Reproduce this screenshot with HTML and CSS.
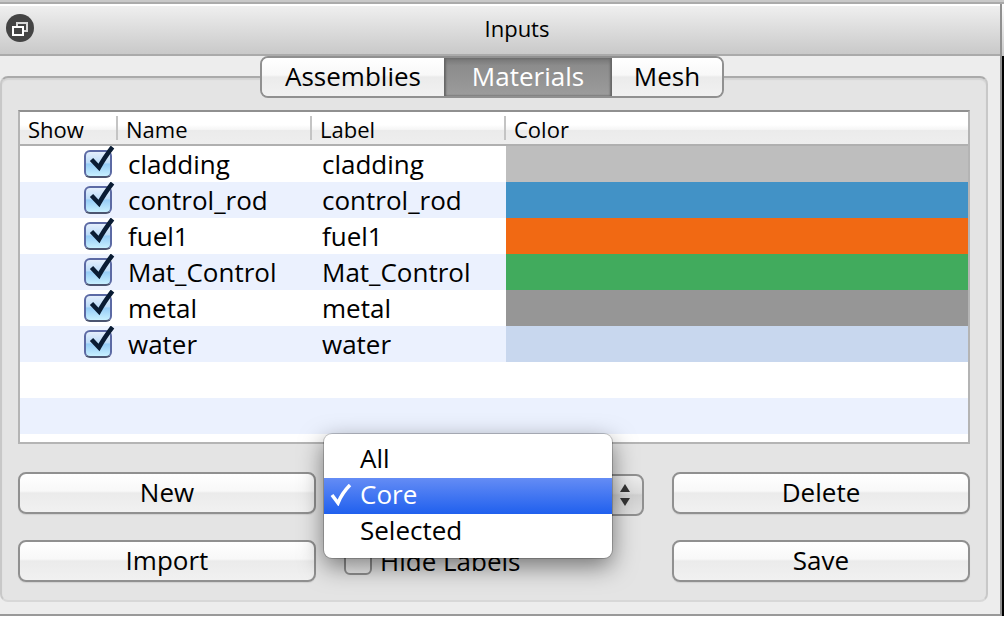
FILE: index.html
```html
<!DOCTYPE html>
<html lang="en">
<head>
<meta charset="utf-8">
<title>Inputs</title>
<link rel="stylesheet" href="styles.css">
</head>
<body>
<svg class="defs" aria-hidden="true">
  <symbol id="tick" viewBox="0 0 32 32">
    <path d="M7.500 13.500 L15 21.500 Q20 12 28.500 1" fill="none" stroke="#0a1c33" stroke-width="4.500"/>
  </symbol>
</svg>
<main class="window">
  <header class="titlebar">
    <button class="float-button" type="button" aria-label="Float panel">
      <svg viewBox="0 0 28 28" width="28" height="28" aria-hidden="true">
        <circle cx="14" cy="14" r="14" fill="#444"/>
        <path d="M11 12V9H21V17H18" fill="none" stroke="#d8d8d8" stroke-width="2"/>
        <rect x="7" y="13" width="10" height="8" fill="#444" stroke="#fff" stroke-width="2"/>
      </svg>
    </button>
    <h1 class="title">Inputs</h1>
  </header>
  <div class="content">
    <nav class="tabs" role="tablist">
      <button class="tab tab-assemblies" type="button" role="tab">Assemblies</button>
      <button class="tab tab-materials" type="button" role="tab" aria-selected="true">Materials</button>
      <button class="tab tab-mesh" type="button" role="tab">Mesh</button>
    </nav>
    <section class="group">
      <div class="list">
        <table class="materials">
          <colgroup><col class="col-show"><col class="col-text"><col class="col-text"><col></colgroup>
          <thead><tr><th>Show</th><th>Name</th><th>Label</th><th>Color</th></tr></thead>
          <tbody>
            <tr><td><span class="check"><input type="checkbox" checked aria-label="Show cladding"><svg class="tick"><use href="#tick"/></svg></span></td><td>cladding</td><td>cladding</td><td class="cladding"></td></tr>
            <tr><td><span class="check"><input type="checkbox" checked aria-label="Show control_rod"><svg class="tick"><use href="#tick"/></svg></span></td><td>control_rod</td><td>control_rod</td><td class="control-rod"></td></tr>
            <tr><td><span class="check"><input type="checkbox" checked aria-label="Show fuel1"><svg class="tick"><use href="#tick"/></svg></span></td><td>fuel1</td><td>fuel1</td><td class="fuel"></td></tr>
            <tr><td><span class="check"><input type="checkbox" checked aria-label="Show Mat_Control"><svg class="tick"><use href="#tick"/></svg></span></td><td>Mat_Control</td><td>Mat_Control</td><td class="mat-control"></td></tr>
            <tr><td><span class="check"><input type="checkbox" checked aria-label="Show metal"><svg class="tick"><use href="#tick"/></svg></span></td><td>metal</td><td>metal</td><td class="metal"></td></tr>
            <tr><td><span class="check"><input type="checkbox" checked aria-label="Show water"><svg class="tick"><use href="#tick"/></svg></span></td><td>water</td><td>water</td><td class="water"></td></tr>
          </tbody>
        </table>
      </div>
      <div class="actions">
        <button class="push" type="button">New</button>
        <div class="picker">
          <select class="scope" aria-label="Show scope">
            <option>All</option><option selected>Core</option><option>Selected</option>
          </select>
          <svg class="arrows" viewBox="0 0 12 22" aria-hidden="true"><path d="M6 0L11 8H1zM6 22L11 14H1z" fill="#333"/></svg>
          <div class="menu" role="menu">
            <button class="item" type="button" role="menuitemradio">All</button>
            <button class="item current" type="button" role="menuitemradio" aria-checked="true"><svg class="mark" viewBox="0 0 22 22" aria-hidden="true"><path d="M2 11l6 8Q12 9 20 1" fill="none" stroke="#fff" stroke-width="3.500"/></svg>Core</button>
            <button class="item" type="button" role="menuitemradio">Selected</button>
          </div>
        </div>
        <button class="push" type="button">Delete</button>
        <button class="push" type="button">Import</button>
        <label class="hide-labels"><input type="checkbox">Hide Labels</label>
        <button class="push" type="button">Save</button>
      </div>
    </section>
  </div>
</main>
</body>
</html>
```
FILE: styles.css
```css
* {
  box-sizing: border-box;
}

body {
  margin: 0;
  min-height: 100vh;
  display: flex;
  flex-direction: column;
  padding: 4px 2px 0 0;
  border-bottom: 2px solid #fff;
  background: linear-gradient(#c8c8c8 2px, #aaa 2px, #aaa 4px, #fff 4px, #c8c8c8 56px, #000 56px);
  font: 26px/36px "Open Sans", "Noto Sans", sans-serif;
  color: #000;
}

.defs {
  position: absolute;
  width: 0;
  height: 0;
}

button,
select,
input {
  margin: 0;
  padding: 0;
  border: 0;
  font: inherit;
  color: inherit;
  appearance: none;
}

.window {
  flex: 1;
  display: flex;
  flex-direction: column;
  background: #ededed;
  border-right: 2px solid #909090;
  border-bottom: 2px solid #999;
}

.titlebar {
  display: flex;
  align-items: center;
  height: 52px;
  padding: 0 0 4px 6px;
  border-top: 2px solid #fff;
  border-bottom: 2px solid #aaa;
  background: linear-gradient(#efefef, #c9c9c9);
}

.float-button {
  width: 28px;
  height: 28px;
  background: none;
}

.float-button svg {
  display: block;
}

.title {
  flex: 1;
  margin: 0;
  text-align: center;
  font-size: 22px;
  font-weight: 400;
}

.content {
  flex: 1;
  display: flex;
  flex-direction: column;
  padding: 0 12px 12px 0;
}

.tabs {
  z-index: 1;
  align-self: center;
  display: flex;
  height: 42px;
  margin: 0 4px -22px 0;
  border: 2px solid #909090;
  border-radius: 8px;
  overflow: hidden;
}

.tab,
.push {
  padding-bottom: 2px;
  background: linear-gradient(#fff, #f8f8f8 45%, #ebebeb 50%, #f1f1f1);
}

.tab-assemblies {
  width: 182px;
}

.tab-materials {
  width: 168px;
  background: linear-gradient(#747474, #8c8c8c 20%, #9c9c9c);
  box-shadow: inset 2px 0 2px #666, inset -2px 0 2px #666;
  color: #fff;
}

.tab-mesh {
  width: 110px;
}

.group {
  flex: 1;
  display: flex;
  flex-direction: column;
  gap: 28px;
  padding: 32px 16px 18px;
  background: #e4e4e4;
  border: 2px solid #c8c8c8;
  border-top-color: #aaa;
  border-bottom-color: #d8d8d8;
  border-radius: 8px;
  box-shadow: inset 0 2px 1px #d4d4d4;
}

.list {
  flex: 1;
  border: 2px solid #b4b4b4;
  border-top-color: #909090;
  background: linear-gradient(#fff 36px, #ebf1fe 36px) 0 34px / 100% 72px;
}

.materials {
  width: 100%;
  table-layout: fixed;
  border-collapse: separate;
  border-spacing: 0;
}

.col-show {
  width: 98px;
}

.col-text {
  width: 194px;
}

th {
  height: 34px;
  padding: 2px 8px 0;
  border-bottom: 2px solid #b0b0b0;
  background:
    linear-gradient(#c4c4c4, #c4c4c4) right 4px / 2px 24px no-repeat,
    linear-gradient(#fff 40%, #f5f5f5 55%, #ebebeb 56%, #eee);
  font-size: 22px;
  line-height: 30px;
  font-weight: 400;
  text-align: left;
}

th:last-child {
  background: linear-gradient(#fff 40%, #f5f5f5 55%, #ebebeb 56%, #eee);
}

td {
  height: 36px;
  padding: 0 10px;
}

td:first-child {
  padding: 0 6px 0 0;
}

.check {
  display: block;
  position: relative;
  width: 28px;
  height: 28px;
  margin-left: auto;
}

.check input {
  display: block;
  width: 28px;
  height: 28px;
  border: 2px solid #5c6aa4;
  border-bottom-color: #4c5570;
  border-radius: 6px;
  background: linear-gradient(#e4effc, #bcdcf8 45%, #96ccf6 50%, #c8f0ff);
}

.tick {
  position: absolute;
  left: 0;
  top: -4px;
  width: 32px;
  height: 32px;
  pointer-events: none;
}

.cladding { background: #bebebe; }
.control-rod { background: #4292c6; }
.fuel { background: #f16913; }
.mat-control { background: #41ab5d; }
.metal { background: #969696; }
.water { background: #c8d7ee; }

.actions {
  display: grid;
  grid-template-columns: 1fr 356px 1fr;
  grid-auto-rows: 42px;
  row-gap: 26px;
}

.push {
  border: 2px solid #909090;
  border-radius: 8px;
  box-shadow: 0 1px 1px #d0d0d0;
}

.picker {
  position: relative;
  padding: 2px 28px 0 8px;
}

.scope {
  display: block;
  width: 100%;
  height: 42px;
  padding-left: 36px;
  border: 2px solid #909090;
  border-radius: 8px;
  background: linear-gradient(#eee, #dcdcdc 45%, #d0d0d0 50%, #dedede);
}

.arrows {
  position: absolute;
  right: 41px;
  top: 12px;
  width: 12px;
  height: 22px;
  pointer-events: none;
}

.menu {
  position: absolute;
  z-index: 2;
  left: 8px;
  top: -38px;
  width: 288px;
  padding: 8px 0;
  background: #fff;
  border-radius: 8px;
  box-shadow: 0 0 0 1px rgba(0, 0, 0, 0.2), 0 8px 24px rgba(0, 0, 0, 0.5);
}

.item {
  display: block;
  position: relative;
  width: 100%;
  height: 36px;
  padding: 0 0 4px 36px;
  background: none;
  line-height: 32px;
  text-align: left;
}

.current {
  background: linear-gradient(#648cf5, #2060ee);
  color: #fff;
}

.mark {
  position: absolute;
  left: 6px;
  top: 6px;
  width: 22px;
  height: 22px;
}

.hide-labels {
  display: flex;
  align-items: center;
  gap: 8px;
  padding-left: 28px;
}

.hide-labels input {
  width: 28px;
  height: 28px;
  border: 2px solid #909090;
  border-radius: 6px;
  background: linear-gradient(#fff, #eee);
}
```
